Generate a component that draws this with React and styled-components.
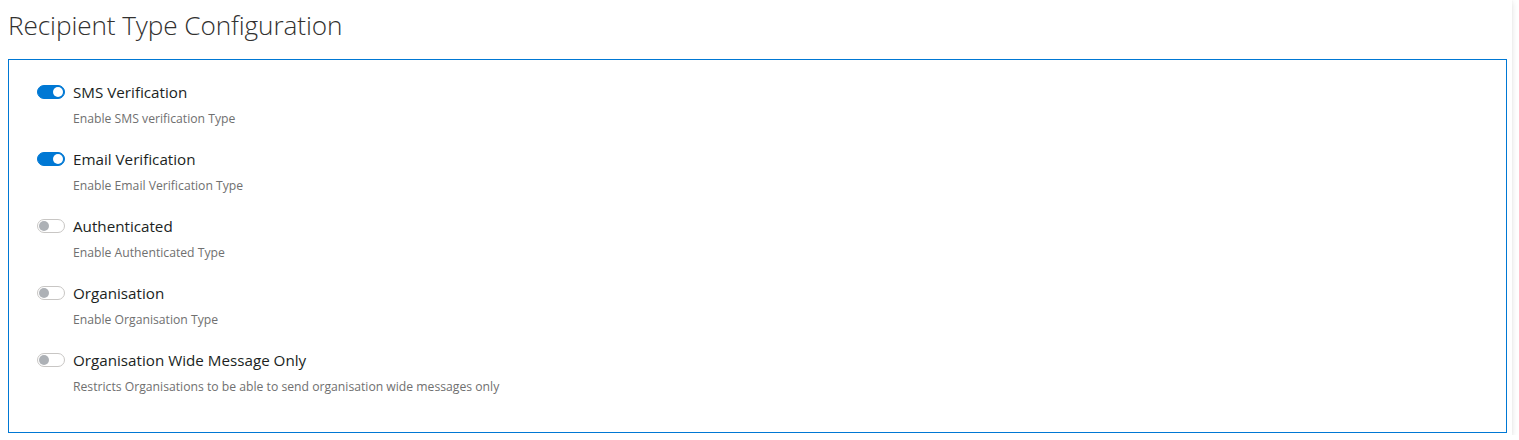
import React, { useState } from "react";
import styled, { createGlobalStyle } from "styled-components";

const Global = createGlobalStyle`
  html, body { margin: 0; padding: 0; background: #ffffff; }
  body { font-family: "Open Sans", "Noto Sans", sans-serif; color: #323130; }
`;

const Page = styled.div`
  width: 1512px;
  height: 435px;
  box-sizing: border-box;
  background: #ffffff;
  box-shadow: 0 1.6px 6px rgba(0, 0, 0, 0.13), 0 0.3px 1px rgba(0, 0, 0, 0.1);
  padding: 5px 5px 0 8px;
`;

const Title = styled.h1`
  margin: 0;
  height: 54px;
  font-family: "Open Sans", sans-serif;
  font-weight: 300;
  font-size: 26.2px;
  line-height: 40px;
  color: #323130;
  letter-spacing: -0.1px;
`;

const Panel = styled.div`
  border: 1px solid #0078d4;
  height: 374px;
  box-sizing: border-box;
  padding: 20px 28px 0 28px;
  display: flex;
  flex-direction: column;
  gap: 20px;
`;

const Item = styled.div`
  display: flex;
  flex-direction: column;
`;

const Row = styled.label`
  display: flex;
  align-items: center;
  gap: 8px;
  height: 24px;
  cursor: pointer;
`;

const Switch = styled.span`
  position: relative;
  width: 28px;
  height: 14px;
  box-sizing: border-box;
  border-radius: 8px;
  border: 1px solid ${(p) => (p.$on ? "#0078d4" : "#c8c6c4")};
  background: ${(p) => (p.$on ? "#0078d4" : "#ffffff")};
  flex: none;

  &::after {
    content: "";
    position: absolute;
    top: 1px;
    left: ${(p) => (p.$on ? "15px" : "1px")};
    width: 10px;
    height: 10px;
    border-radius: 50%;
    background: ${(p) => (p.$on ? "#ffffff" : "#adb1b6")};
  }
`;

const Label = styled.span`
  font-size: 15.2px;
  color: #201f1e;
  line-height: 20px;
`;

const Desc = styled.div`
  margin-left: 36px;
  margin-top: 7px;
  font-size: 12.2px;
  line-height: 16px;
  color: #707070;
`;

const items = [
  { label: "SMS Verification", desc: "Enable SMS verification Type", on: true },
  { label: "Email Verification", desc: "Enable Email Verification Type", on: true },
  { label: "Authenticated", desc: "Enable Authenticated Type", on: false },
  { label: "Organisation", desc: "Enable Organisation Type", on: false },
  {
    label: "Organisation Wide Message Only",
    desc: "Restricts Organisations to be able to send organisation wide messages only",
    on: false,
  },
];

export default function App() {
  const [state, setState] = useState(items.map((i) => i.on));
  return (
    <>
      <Global />
      <Page>
        <Title>Recipient Type Configuration</Title>
        <Panel>
          {items.map((it, i) => (
            <Item key={it.label}>
              <Row
                onClick={() =>
                  setState((s) => s.map((v, j) => (j === i ? !v : v)))
                }
              >
                <Switch $on={state[i]} />
                <Label>{it.label}</Label>
              </Row>
              <Desc>{it.desc}</Desc>
            </Item>
          ))}
        </Panel>
      </Page>
    </>
  );
}
